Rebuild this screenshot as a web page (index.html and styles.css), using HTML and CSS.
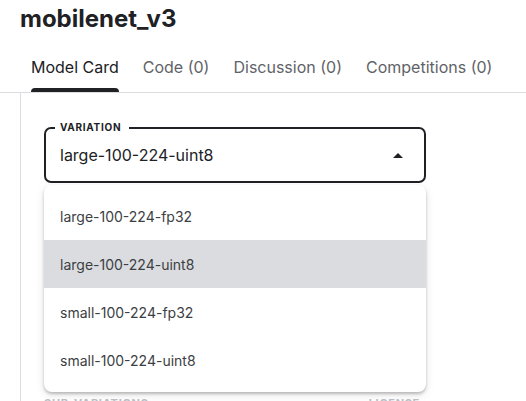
FILE: index.html
```html
<!DOCTYPE html>
<html lang="en">
<head>
<meta charset="utf-8">
<title>mobilenet_v3</title>
<link rel="stylesheet" href="styles.css">
</head>
<body>
  <h1 class="title">mobilenet_v3</h1>
  <nav class="tabs">
    <div class="tab active"><span class="tab-label">Model Card</span><span class="tab-bar"></span></div>
    <div class="tab"><span class="tab-label">Code (0)</span><span class="tab-bar"></span></div>
    <div class="tab"><span class="tab-label">Discussion (0)</span><span class="tab-bar"></span></div>
    <div class="tab"><span class="tab-label">Competitions (0)</span><span class="tab-bar"></span></div>
  </nav>
  <main class="content">
    <div class="select-wrap">
      <div class="select">
        <span class="select-label">VARIATION</span>
        <span class="select-value">large-100-224-uint8</span>
        <svg class="caret" width="10" height="5" viewBox="0 0 10 5"><path d="M0 5 L5 0 L10 5 Z" fill="#202124"/></svg>
      </div>
      <ul class="menu">
        <li class="menu-item">large-100-224-fp32</li>
        <li class="menu-item selected">large-100-224-uint8</li>
        <li class="menu-item">small-100-224-fp32</li>
        <li class="menu-item">small-100-224-uint8</li>
      </ul>
    </div>
    <div class="meta-row">
      <span class="meta-label">SUB-VARIATIONS</span>
      <span class="meta-label">LICENSE</span>
    </div>
  </main>
</body>
</html>
```
FILE: styles.css
```css
html, body {
  margin: 0;
  padding: 0;
  background: #ffffff;
  height: 401px;
  overflow: hidden;
}
body {
  font-family: Inter, "Noto Sans", "Liberation Sans", sans-serif;
  color: #202124;
}
.title {
  margin: 0;
  padding: 4px 0 0 20px;
  font-size: 24px;
  line-height: 29px;
  font-weight: 700;
  color: #202124;
}
.tabs {
  display: flex;
  gap: 24px;
  padding-left: 31px;
  margin-top: 11px;
  border-bottom: 1px solid #dadce0;
}
.tab {
  display: flex;
  flex-direction: column;
  align-items: stretch;
}
.tab-label {
  font-size: 16px;
  line-height: 20px;
  padding-top: 13px;
  padding-bottom: 11px;
  color: #5f6368;
  white-space: nowrap;
}
.tab.active .tab-label {
  color: #202124;
}
.tab-bar {
  height: 4px;
  border-radius: 4px 4px 0 0;
  background: transparent;
}
.tab.active .tab-bar {
  background: #202124;
}
.content {
  margin-left: 20px;
  border-left: 1px solid #dadce0;
  padding: 34px 0 0 23px;
}
.select-wrap {
  position: relative;
  width: 382px;
}
.select {
  position: relative;
  box-sizing: border-box;
  height: 56px;
  border: 2px solid #202124;
  border-radius: 7px;
  display: flex;
  align-items: center;
  justify-content: space-between;
  padding: 0 21px 0 14px;
}
.select-label {
  position: absolute;
  top: -8px;
  left: 9px;
  padding: 0 8px 0 5px;
  background: #ffffff;
  font-size: 10px;
  line-height: 12px;
  font-weight: 700;
  letter-spacing: 0.7px;
  color: #202124;
}
.select-value {
  font-size: 16px;
  line-height: 20px;
  color: #202124;
}
.caret {
  display: block;
}
.menu {
  position: absolute;
  top: calc(100% + 2px);
  left: 0;
  width: 382px;
  margin: 0;
  padding: 7px 0 8px;
  list-style: none;
  background: #ffffff;
  border-radius: 8px;
  box-shadow: 0 2px 3px rgba(0, 0, 0, 0.22), 0 3px 10px rgba(0, 0, 0, 0.1);
  z-index: 2;
}
.menu-item {
  height: 48px;
  display: flex;
  align-items: center;
  padding-left: 16px;
  font-size: 14px;
  color: #3c4043;
}
.menu-item.selected {
  background: #dadce0;
}
.meta-row {
  display: flex;
  justify-content: space-between;
  width: 382px;
  padding-right: 6px;
  box-sizing: border-box;
  margin-top: 213px;
}
.meta-label {
  font-size: 11px;
  line-height: 14px;
  font-weight: 700;
  letter-spacing: 0.7px;
  color: #bdc1c6;
}
```
